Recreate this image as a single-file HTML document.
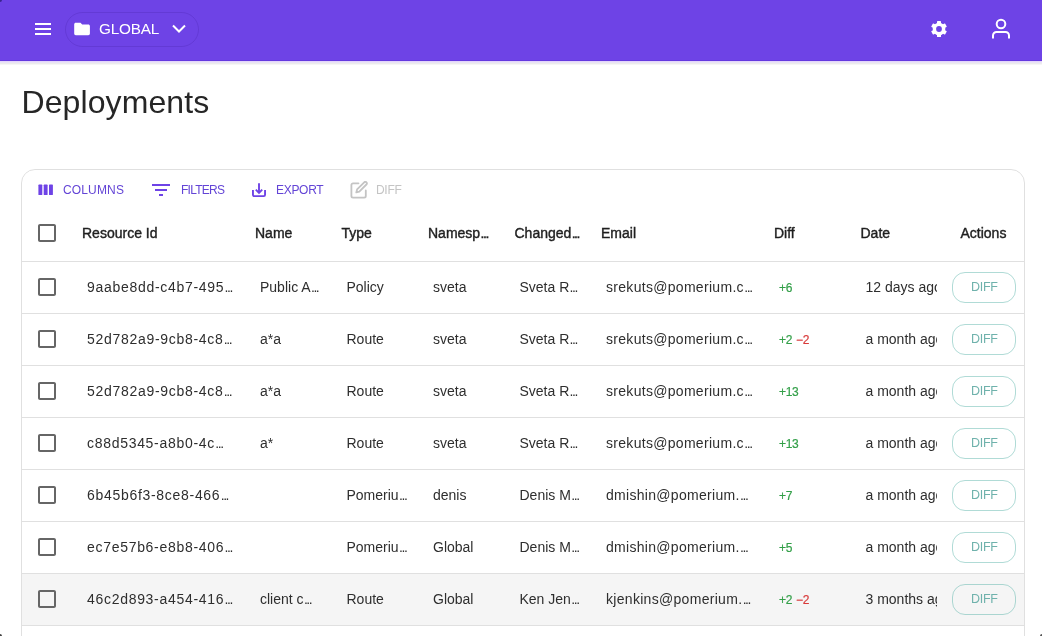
<!DOCTYPE html>
<html><head><meta charset="utf-8"><title>Deployments</title>
<style>
*{box-sizing:border-box}
html,body{margin:0;padding:0;width:1042px;height:636px;overflow:hidden;background:#fff;font-family:"Liberation Sans",sans-serif;}
#root{position:absolute;left:0;top:0;width:1042px;height:636px;overflow:hidden;will-change:transform}
.abs{position:absolute}
.bar{position:absolute;left:0;top:0;width:1042px;height:61px;background:#6E43E6;}
.chip{position:absolute;left:65px;top:12px;width:134px;height:34.5px;border:1px solid rgba(40,10,120,0.15);border-radius:18px;}
.title{position:absolute;left:21.5px;top:84px;font-size:32px;line-height:36px;color:#262626;white-space:nowrap;letter-spacing:0.1px}
.grid{position:absolute;left:21px;top:169px;width:1004px;height:520px;border:1px solid #e0e0e0;border-radius:14px;}
.tb{position:absolute;top:180px;height:20px;line-height:20px;font-size:12px;color:#6344D6;white-space:nowrap}
.hd{position:absolute;top:205px;height:56px;line-height:56px;font-size:14px;color:#1f1f1f;white-space:nowrap;-webkit-text-stroke:0.4px #1f1f1f}
.row{position:absolute;left:22px;width:1002px;height:52px;border-bottom:1px solid #e0e0e0}
.cell{position:absolute;height:52px;line-height:52px;font-size:14px;color:#2e2e2e;white-space:nowrap;overflow:hidden}
.cb{position:absolute;left:35px;}
.btn{position:absolute;left:952px;width:64px;height:31px;border:1px solid rgba(80,175,165,0.45);border-radius:13px;color:#6FB2AC;font-size:12.5px;line-height:29px;text-align:center;letter-spacing:-0.3px;text-indent:0.8px}
.el{letter-spacing:-1.4px;margin-left:0.3px}
.id{letter-spacing:0.7px}
.em{letter-spacing:0.3px}
.g{color:#35a04a;font-size:12px;letter-spacing:-0.3px;-webkit-text-stroke:0.2px #2e9d45}
.r{color:#d93a3a;font-size:12px;letter-spacing:-0.2px;-webkit-text-stroke:0.2px #d63c3c}
</style></head><body><div id="root">
<div class="bar"></div>
<div class="abs" style="left:0;top:60px;width:1042px;height:1px;background:#6438DF"></div>
<div class="abs" style="left:0;top:61px;width:1042px;height:1px;background:#E3D6FA"></div>
<div class="abs" style="left:0;top:62px;width:1042px;height:1px;background:#E9E2F6"></div>
<div class="abs" style="left:0;top:63px;width:1042px;height:1px;background:#EBEBEB"></div>
<div class="abs" style="left:0;top:64px;width:1042px;height:1px;background:#F6F6F6"></div>
<svg class="abs" style="left:35px;top:23px" width="17" height="13" viewBox="0 0 17 13"><g fill="#fff"><rect x="0" y="0" width="16" height="2"/><rect x="0" y="5" width="16" height="2"/><rect x="0" y="10" width="16" height="2"/></g></svg>
<div class="chip"></div>
<svg class="abs" style="left:74px;top:22px" width="17" height="14" viewBox="0 0 17 14"><path fill="#fff" d="M6.5 0.8H1.8C0.9 0.8 0.2 1.5 0.2 2.4V11.6C0.2 12.5 0.9 13.2 1.8 13.2H14.3C15.2 13.2 15.9 12.5 15.9 11.6V4.1C15.9 3.2 15.2 2.5 14.3 2.5H8.2Z"/></svg>
<div class="abs" style="left:99px;top:19px;font-size:15.3px;line-height:20px;color:#fff;letter-spacing:-0.2px">GLOBAL</div>
<svg class="abs" style="left:171px;top:23px" width="16" height="12" viewBox="0 0 16 12"><path d="M2 2.5L8 8.5L14 2.5" fill="none" stroke="#fff" stroke-width="2"/></svg>
<svg class="abs" style="left:929px;top:19px" width="20" height="20" viewBox="0 0 20 20"><g fill="#fff"><circle cx="10" cy="10" r="6.3"/><rect x="8" y="2" width="4" height="16" rx="0.6"/><rect x="8" y="2" width="4" height="16" rx="0.6" transform="rotate(60 10 10)"/><rect x="8" y="2" width="4" height="16" rx="0.6" transform="rotate(120 10 10)"/></g><circle cx="10" cy="10" r="2.9" fill="#6E43E6"/></svg>
<svg class="abs" style="left:990px;top:17px" width="22" height="24" viewBox="0 0 22 24"><g fill="none" stroke="#fff" stroke-width="2"><circle cx="11" cy="7" r="4.3"/><path d="M3 21.5V18.5a3.5 3.5 0 0 1 3.5-3.5h9a3.5 3.5 0 0 1 3.5 3.5v3"/></g></svg>
<div class="title">Deployments</div>
<div class="grid"></div>
<svg class="abs" style="left:38px;top:184px" width="16" height="12" viewBox="0 0 16 12"><g fill="#6E43E6"><rect x="0.4" y="0.6" width="3.9" height="10.5" rx="0.7"/><rect x="5.7" y="0.6" width="3.9" height="10.5" rx="0.7"/><rect x="11" y="0.6" width="3.9" height="10.5" rx="0.7"/></g></svg>
<div class="tb" style="left:63px;letter-spacing:0.15px">COLUMNS</div>
<svg class="abs" style="left:152px;top:183px" width="19" height="14" viewBox="0 0 19 14"><g fill="#6E43E6"><rect x="0" y="1" width="18" height="2"/><rect x="3" y="6" width="12" height="2"/><rect x="7" y="11" width="4" height="2"/></g></svg>
<div class="tb" style="left:181px;letter-spacing:-0.75px">FILTERS</div>
<svg class="abs" style="left:251px;top:182px" width="16" height="16" viewBox="0 0 16 16"><g fill="none" stroke="#6E43E6" stroke-width="1.9"><path d="M8 1.2V10.5"/><path d="M4.8 7.6L8 10.8L11.2 7.6"/><path d="M1.95 8.1v4.7a1.3 1.3 0 0 0 1.3 1.3h9.5a1.3 1.3 0 0 0 1.3-1.3V8.1"/></g></svg>
<div class="tb" style="left:276px;letter-spacing:-0.3px">EXPORT</div>
<svg class="abs" style="left:350px;top:181px" width="19" height="18" viewBox="0 0 19 18"><g fill="none" stroke="#c4c4c4" stroke-width="1.8" stroke-linecap="round" stroke-linejoin="round"><path d="M8.5 2.3H3a1.6 1.6 0 0 0-1.6 1.6v11.2A1.6 1.6 0 0 0 3 16.7h11.2a1.6 1.6 0 0 0 1.6-1.6V9.5"/><path d="M14.2 1.3a1.5 1.5 0 0 1 2.2 2.2L9.3 10.6l-3 .8.8-3z"/></g></svg>
<div class="tb" style="left:376px;color:#c4c4c4;letter-spacing:-0.3px">DIFF</div>
<div class="cb" style="top:221px"><svg width="24" height="24" viewBox="0 0 24 24"><path fill="#666" d="M19 5v14H5V5zm0-2H5c-1.11 0-2 .9-2 2v14c0 1.1.89 2 2 2h14c1.1 0 2-.9 2-2V5c0-1.1-.9-2-2-2"/></svg></div>
<div class="hd" style="left:82px">Resource Id</div>
<div class="hd" style="left:255px">Name</div>
<div class="hd" style="left:341.5px">Type</div>
<div class="hd" style="left:428px">Namesp<span class="el">...</span></div>
<div class="hd" style="left:514.5px">Changed<span class="el">...</span></div>
<div class="hd" style="left:601px">Email</div>
<div class="hd" style="left:774px">Diff</div>
<div class="hd" style="left:860.5px">Date</div>
<div class="hd" style="left:960.5px">Actions</div>
<div class="abs" style="left:22px;top:261px;width:1002px;height:1px;background:#e0e0e0"></div>
<div class="row" style="top:262px;"></div>
<div class="cb" style="top:275px"><svg width="24" height="24" viewBox="0 0 24 24"><path fill="#666" d="M19 5v14H5V5zm0-2H5c-1.11 0-2 .9-2 2v14c0 1.1.89 2 2 2h14c1.1 0 2-.9 2-2V5c0-1.1-.9-2-2-2"/></svg></div>
<div class="cell id" style="top:261px;left:87px;width:152px">9aabe8dd-c4b7-495<span class="el">...</span></div>
<div class="cell" style="top:261px;left:260px;width:65.5px">Public A<span class="el">...</span></div>
<div class="cell" style="top:261px;left:346.5px;width:65.5px">Policy</div>
<div class="cell" style="top:261px;left:433px;width:65.5px">sveta</div>
<div class="cell" style="top:261px;left:519.5px;width:65.5px">Sveta R<span class="el">...</span></div>
<div class="cell em" style="top:261px;left:606px;width:152px">srekuts@pomerium.c<span class="el">...</span></div>
<div class="cell" style="top:261px;left:779px;width:70px"><span class="g">+6</span></div>
<div class="cell" style="top:261px;left:865.5px;width:71.5px">12 days ago</div>
<div class="btn" style="top:272px">DIFF</div>
<div class="row" style="top:314px;"></div>
<div class="cb" style="top:327px"><svg width="24" height="24" viewBox="0 0 24 24"><path fill="#666" d="M19 5v14H5V5zm0-2H5c-1.11 0-2 .9-2 2v14c0 1.1.89 2 2 2h14c1.1 0 2-.9 2-2V5c0-1.1-.9-2-2-2"/></svg></div>
<div class="cell id" style="top:313px;left:87px;width:152px">52d782a9-9cb8-4c8<span class="el">...</span></div>
<div class="cell" style="top:313px;left:260px;width:65.5px">a*a</div>
<div class="cell" style="top:313px;left:346.5px;width:65.5px">Route</div>
<div class="cell" style="top:313px;left:433px;width:65.5px">sveta</div>
<div class="cell" style="top:313px;left:519.5px;width:65.5px">Sveta R<span class="el">...</span></div>
<div class="cell em" style="top:313px;left:606px;width:152px">srekuts@pomerium.c<span class="el">...</span></div>
<div class="cell" style="top:313px;left:779px;width:70px"><span class="g">+2</span> <span class="r">−2</span></div>
<div class="cell" style="top:313px;left:865.5px;width:71.5px">a month ago</div>
<div class="btn" style="top:324px">DIFF</div>
<div class="row" style="top:366px;"></div>
<div class="cb" style="top:379px"><svg width="24" height="24" viewBox="0 0 24 24"><path fill="#666" d="M19 5v14H5V5zm0-2H5c-1.11 0-2 .9-2 2v14c0 1.1.89 2 2 2h14c1.1 0 2-.9 2-2V5c0-1.1-.9-2-2-2"/></svg></div>
<div class="cell id" style="top:365px;left:87px;width:152px">52d782a9-9cb8-4c8<span class="el">...</span></div>
<div class="cell" style="top:365px;left:260px;width:65.5px">a*a</div>
<div class="cell" style="top:365px;left:346.5px;width:65.5px">Route</div>
<div class="cell" style="top:365px;left:433px;width:65.5px">sveta</div>
<div class="cell" style="top:365px;left:519.5px;width:65.5px">Sveta R<span class="el">...</span></div>
<div class="cell em" style="top:365px;left:606px;width:152px">srekuts@pomerium.c<span class="el">...</span></div>
<div class="cell" style="top:365px;left:779px;width:70px"><span class="g">+13</span></div>
<div class="cell" style="top:365px;left:865.5px;width:71.5px">a month ago</div>
<div class="btn" style="top:376px">DIFF</div>
<div class="row" style="top:418px;"></div>
<div class="cb" style="top:431px"><svg width="24" height="24" viewBox="0 0 24 24"><path fill="#666" d="M19 5v14H5V5zm0-2H5c-1.11 0-2 .9-2 2v14c0 1.1.89 2 2 2h14c1.1 0 2-.9 2-2V5c0-1.1-.9-2-2-2"/></svg></div>
<div class="cell id" style="top:417px;left:87px;width:152px">c88d5345-a8b0-4c<span class="el">...</span></div>
<div class="cell" style="top:417px;left:260px;width:65.5px">a*</div>
<div class="cell" style="top:417px;left:346.5px;width:65.5px">Route</div>
<div class="cell" style="top:417px;left:433px;width:65.5px">sveta</div>
<div class="cell" style="top:417px;left:519.5px;width:65.5px">Sveta R<span class="el">...</span></div>
<div class="cell em" style="top:417px;left:606px;width:152px">srekuts@pomerium.c<span class="el">...</span></div>
<div class="cell" style="top:417px;left:779px;width:70px"><span class="g">+13</span></div>
<div class="cell" style="top:417px;left:865.5px;width:71.5px">a month ago</div>
<div class="btn" style="top:428px">DIFF</div>
<div class="row" style="top:470px;"></div>
<div class="cb" style="top:483px"><svg width="24" height="24" viewBox="0 0 24 24"><path fill="#666" d="M19 5v14H5V5zm0-2H5c-1.11 0-2 .9-2 2v14c0 1.1.89 2 2 2h14c1.1 0 2-.9 2-2V5c0-1.1-.9-2-2-2"/></svg></div>
<div class="cell id" style="top:469px;left:87px;width:152px">6b45b6f3-8ce8-466<span class="el">...</span></div>
<div class="cell" style="top:469px;left:260px;width:65.5px"></div>
<div class="cell" style="top:469px;left:346.5px;width:65.5px">Pomeriu<span class="el">...</span></div>
<div class="cell" style="top:469px;left:433px;width:65.5px">denis</div>
<div class="cell" style="top:469px;left:519.5px;width:65.5px">Denis M<span class="el">...</span></div>
<div class="cell em" style="top:469px;left:606px;width:152px">dmishin@pomerium.<span class="el">...</span></div>
<div class="cell" style="top:469px;left:779px;width:70px"><span class="g">+7</span></div>
<div class="cell" style="top:469px;left:865.5px;width:71.5px">a month ago</div>
<div class="btn" style="top:480px">DIFF</div>
<div class="row" style="top:522px;"></div>
<div class="cb" style="top:535px"><svg width="24" height="24" viewBox="0 0 24 24"><path fill="#666" d="M19 5v14H5V5zm0-2H5c-1.11 0-2 .9-2 2v14c0 1.1.89 2 2 2h14c1.1 0 2-.9 2-2V5c0-1.1-.9-2-2-2"/></svg></div>
<div class="cell id" style="top:521px;left:87px;width:152px">ec7e57b6-e8b8-406<span class="el">...</span></div>
<div class="cell" style="top:521px;left:260px;width:65.5px"></div>
<div class="cell" style="top:521px;left:346.5px;width:65.5px">Pomeriu<span class="el">...</span></div>
<div class="cell" style="top:521px;left:433px;width:65.5px">Global</div>
<div class="cell" style="top:521px;left:519.5px;width:65.5px">Denis M<span class="el">...</span></div>
<div class="cell em" style="top:521px;left:606px;width:152px">dmishin@pomerium.<span class="el">...</span></div>
<div class="cell" style="top:521px;left:779px;width:70px"><span class="g">+5</span></div>
<div class="cell" style="top:521px;left:865.5px;width:71.5px">a month ago</div>
<div class="btn" style="top:532px">DIFF</div>
<div class="row" style="top:574px;background:#f5f5f5;"></div>
<div class="cb" style="top:587px"><svg width="24" height="24" viewBox="0 0 24 24"><path fill="#666" d="M19 5v14H5V5zm0-2H5c-1.11 0-2 .9-2 2v14c0 1.1.89 2 2 2h14c1.1 0 2-.9 2-2V5c0-1.1-.9-2-2-2"/></svg></div>
<div class="cell id" style="top:573px;left:87px;width:152px">46c2d893-a454-416<span class="el">...</span></div>
<div class="cell" style="top:573px;left:260px;width:65.5px">client c<span class="el">...</span></div>
<div class="cell" style="top:573px;left:346.5px;width:65.5px">Route</div>
<div class="cell" style="top:573px;left:433px;width:65.5px">Global</div>
<div class="cell" style="top:573px;left:519.5px;width:65.5px">Ken Jen<span class="el">...</span></div>
<div class="cell em" style="top:573px;left:606px;width:152px">kjenkins@pomerium.<span class="el">...</span></div>
<div class="cell" style="top:573px;left:779px;width:70px"><span class="g">+2</span> <span class="r">−2</span></div>
<div class="cell" style="top:573px;left:865.5px;width:71.5px">3 months ago</div>
<div class="btn" style="top:584px">DIFF</div>
<div class="abs" style="left:0;top:0;width:2px;height:2px;background:#3a2590;border-bottom-right-radius:2px"></div>
<div class="abs" style="left:0;top:634px;width:2px;height:2px;background:#444;border-top-right-radius:2px"></div>
<div class="abs" style="left:1040px;top:634px;width:2px;height:2px;background:#555;border-top-left-radius:2px"></div>
</div></body></html>
